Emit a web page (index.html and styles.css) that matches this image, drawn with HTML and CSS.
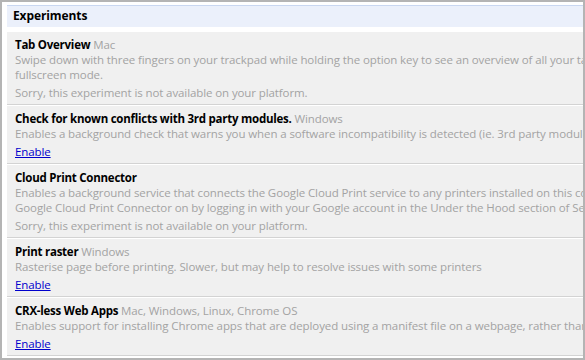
FILE: index.html
```html
<!DOCTYPE html>
<html lang="en">

<head>
    <meta charset="UTF-8">
    <title>Experiments</title>
    <link rel="stylesheet" href="styles.css">
</head>

<body>
    <div class="flags">
        <div class="flags__header">Experiments</div>
        <div class="flags__list">
            <div class="experiment">
                <div class="experiment__title">
                    <span class="experiment__name">Tab Overview</span>
                    <span class="experiment__platforms">Mac</span>
                </div>
                <div class="experiment__desc">Swipe down with three fingers on your trackpad while holding the option key to see an overview of all your tabs. Also works in<br>fullscreen mode.</div>
                <div class="experiment__note">Sorry, this experiment is not available on your platform.</div>
            </div>
            <div class="experiment">
                <div class="experiment__title">
                    <span class="experiment__name">Check for known conflicts with 3rd party modules.</span>
                    <span class="experiment__platforms">Windows</span>
                </div>
                <div class="experiment__desc">Enables a background check that warns you when a software incompatibility is detected (ie. 3rd party modules that crash the browser).</div>
                <a class="experiment__link" href="#">Enable</a>
            </div>
            <div class="experiment">
                <div class="experiment__title">
                    <span class="experiment__name">Cloud Print Connector</span>
                </div>
                <div class="experiment__desc">Enables a background service that connects the Google Cloud Print service to any printers installed on this computer. Once enabled, you can turn<br>Google Cloud Print Connector on by logging in with your Google account in the Under the Hood section of Settings.</div>
                <div class="experiment__note">Sorry, this experiment is not available on your platform.</div>
            </div>
            <div class="experiment">
                <div class="experiment__title">
                    <span class="experiment__name">Print raster</span>
                    <span class="experiment__platforms">Windows</span>
                </div>
                <div class="experiment__desc">Rasterise page before printing. Slower, but may help to resolve issues with some printers</div>
                <a class="experiment__link" href="#">Enable</a>
            </div>
            <div class="experiment">
                <div class="experiment__title">
                    <span class="experiment__name">CRX-less Web Apps</span>
                    <span class="experiment__platforms">Mac, Windows, Linux, Chrome OS</span>
                </div>
                <div class="experiment__desc">Enables support for installing Chrome apps that are deployed using a manifest file on a webpage, rather than by packaging the manifest and icons into a crx file.</div>
                <a class="experiment__link" href="#">Enable</a>
            </div>
        </div>
    </div>
</body>

</html>
```

FILE: styles.css
```css
body {
    margin: 0;
    font-family: 'Open Sans', 'Noto Sans', sans-serif;
}

.flags {
    height: 360px;
    box-sizing: border-box;
    border: 2px solid #b4b4b4;
    padding: 3px 0 0 5px;
    background-color: #fff;
    overflow: hidden;
    white-space: nowrap;
}

.flags__header {
    height: 22px;
    box-sizing: border-box;
    border-top: 1px solid #c9d7f1;
    background-color: #ebf0fb;
    padding-left: 6px;
    font-size: 12px;
    font-weight: bold;
    line-height: 20px;
    letter-spacing: -0.1px;
    color: #000;
}

.flags__list {
    margin-top: 5px;
}

.experiment {
    background-color: #f0f0f0;
    padding: 5px 8px 4px;
    margin-bottom: 1px;
    border-bottom: 1px solid #d3d3d3;
    font-size: 11.5px;
    line-height: 15px;
    letter-spacing: -0.1px;
    color: #a3a3a3;
}

.experiment__name {
    font-weight: bold;
    letter-spacing: -0.25px;
    color: #000;
}

.experiment__note {
    margin-top: 3px;
}

.experiment__link {
    display: inline-block;
    margin-top: 3px;
    color: #0000cc;
}
```
